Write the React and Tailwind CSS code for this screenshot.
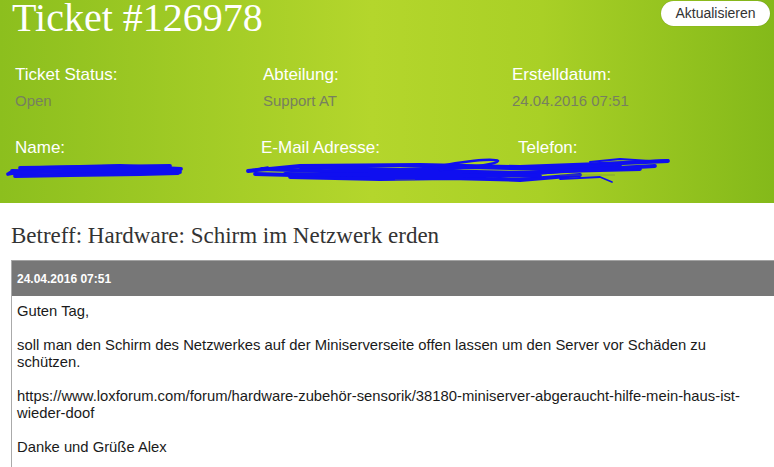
import React from "react";

// Ticket detail — green header with meta fields, subject and first message
const sans = "font-['Liberation_Sans',Arial,sans-serif]";
const serif = "font-['Liberation_Serif','Times_New_Roman',serif]";

function Field({ label, value, className = "" }) {
  return (
    <div className={className}>
      <div className="text-[17px] leading-[20px] text-white">{label}</div>
      <div className="mt-[7px] text-[15px] leading-[18px] text-[#77805f]">{value}</div>
    </div>
  );
}

// blue pen strokes hiding personal data
function Redactions() {
  const y = (v) => v - 158;
  const s = (pts) => pts.map(([x, v], i) => `${i ? "L" : "M"}${x} ${y(v)}`).join(" ");
  const strokes = [
    [[8, 174], [40, 168], [120, 166], [181, 169]],
    [[12, 171], [60, 172], [150, 171], [180, 172]],
    [[15, 176], [70, 175], [140, 174], [178, 173]],
    [[20, 168], [100, 167], [170, 166]],
    [[10, 173], [90, 170], [175, 170]],
    [[248, 171], [300, 166], [420, 165], [520, 167], [600, 164], [668, 161]],
    [[255, 174], [330, 176], [440, 173], [500, 176], [560, 171], [640, 169]],
    [[290, 177], [380, 179], [450, 178], [520, 180], [580, 175]],
    [[300, 167], [400, 170], [470, 167], [540, 169], [620, 165]],
    [[262, 169], [350, 172], [430, 171], [530, 173], [600, 169], [655, 166]],
    [[285, 174], [370, 175], [460, 175], [540, 176]],
  ];
  return (
    <svg width="774" height="40" viewBox="0 0 774 40" className="block">
      <g fill="none" stroke="#0f0ff0" strokeLinecap="round" strokeLinejoin="round">
        {strokes.map((p, i) => (
          <path key={i} d={s(p)} strokeWidth="3.8" />
        ))}
        <path d={`M430 ${y(168)} C460 ${y(161)} 495 ${y(158)} 498 ${y(161)} C496 ${y(165)} 470 ${y(167)} 440 ${y(170)}`} strokeWidth="2.5" />
        <path d={`M590 ${y(162)} L620 ${y(159)} L650 ${y(161)} L668 ${y(160)}`} strokeWidth="2" />
        <path d={`M560 ${y(179)} L600 ${y(177)} L612 ${y(182)}`} strokeWidth="1.8" />
        <path d={`M250 ${y(170)} L268 ${y(167)}`} strokeWidth="1.5" />
      </g>
      <g fill="none" stroke="#6b7a4a" strokeWidth="0.8" opacity="0.6">
        <path d={`M395 ${y(180)} L415 ${y(180)}`} />
        <path d={`M560 ${y(175)} L615 ${y(175)}`} />
      </g>
    </svg>
  );
}

export default function App() {
  return (
    <div className={`${sans} w-[774px] h-[467px] overflow-hidden bg-white`}>
      {/* Header */}
      <div className="h-[203px] bg-[linear-gradient(to_right,#8cbf1e_0%,#b4d62c_48%,#a9d026_70%,#84b91a_100%)]">
        <div className="flex items-start justify-between">
          <h1 className={`${serif} ml-[12px] text-[40px] leading-[36px] text-white`}>Ticket #126978</h1>
          <button className="mt-[1px] mr-[4px] h-[25px] w-[109px] rounded-full bg-white text-[14px] text-[#333] shadow-[0_0_1px_rgba(0,0,0,0.3)]">
            Aktualisieren
          </button>
        </div>

        <div className="mt-[29px] grid grid-cols-[248px_249px_1fr] pl-[15px]">
          <Field label="Ticket Status:" value="Open" />
          <Field label="Abteilung:" value="Support AT" />
          <Field label="Erstelldatum:" value="24.04.2016 07:51" />
        </div>

        <div className="mt-[28px] grid grid-cols-[248px_249px_1fr] pl-[15px] text-[17px] leading-[20px] text-white">
          <div>Name:</div>
          <div className="ml-[-2px]">E-Mail Adresse:</div>
          <div className="ml-[6px]">Telefon:</div>
        </div>
        <Redactions />
      </div>

      {/* Subject */}
      <h2 className={`${serif} ml-[11px] mt-[20px] text-[23px] leading-[26px] text-[#333]`}>
        Betreff: Hardware: Schirm im Netzwerk erden
      </h2>

      {/* Message */}
      <div className="ml-[11px] mt-[11px] border-l border-[#aaa]">
        <div className="flex h-[36px] items-center border-t border-[#a3a3a3] bg-[#777] pl-[5px] text-[12px] font-bold leading-[16px] text-white">
          24.04.2016 07:51
        </div>
        <div className="pl-[5px] pr-[6px] pt-[7px] pb-[24px] text-[14.8px] leading-[17px] text-[#1a1a1a]">
          Guten Tag,
          <br />
          <br />
          soll man den Schirm des Netzwerkes auf der Miniserverseite offen lassen um den Server vor Schäden zu schützen.
          <br />
          <br />
          https://www.loxforum.com/forum/hardware-zubehör-sensorik/38180-miniserver-abgeraucht-hilfe-mein-haus-ist-wieder-doof
          <br />
          <br />
          Danke und Grüße Alex
        </div>
      </div>
    </div>
  );
}
